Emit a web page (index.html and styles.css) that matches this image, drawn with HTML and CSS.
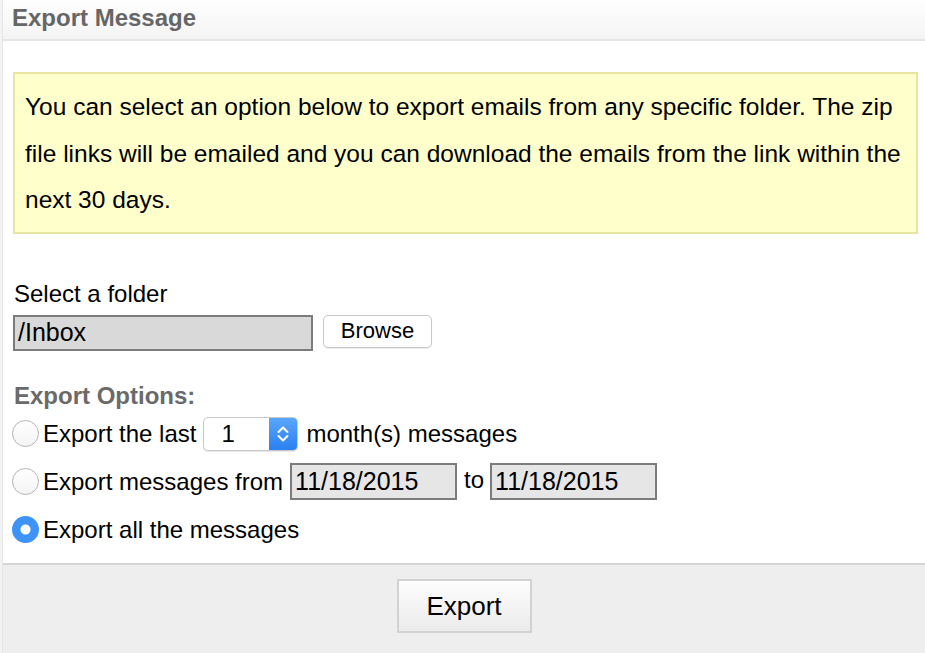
FILE: index.html
```html
<!DOCTYPE html>
<html>
<head>
<meta charset="utf-8">
<link rel="stylesheet" href="styles.css">
</head>
<body>
<div class="dialog">
  <div class="header"><span class="title">Export Message</span></div>
  <div class="content">
    <div class="notice">You can select an option below to export emails from any specific folder. The zip file links will be emailed and you can download the emails from the link within the next 30 days.</div>
    <div class="label">Select a folder</div>
    <div class="folder-row">
      <div class="field folder">/Inbox</div>
      <button class="browse">Browse</button>
    </div>
    <div class="section">Export Options:</div>
    <div class="opt">
      <span class="radio"></span>
      <span class="opt-text">Export the last</span>
      <span class="select"><span class="sel-val">1</span><span class="sel-arrow"><svg width="14" height="22" viewBox="0 0 14 22"><path d="M2.5 9 L7 4.5 L11.5 9 M2.5 13 L7 17.5 L11.5 13" fill="none" stroke="#fff" stroke-width="2" stroke-linecap="round" stroke-linejoin="round"/></svg></span></span>
      <span class="opt-text">month(s) messages</span>
    </div>
    <div class="opt">
      <span class="radio"></span>
      <span class="opt-text">Export messages from</span>
      <span class="field date">11/18/2015</span>
      <span class="to">to</span>
      <span class="field date">11/18/2015</span>
    </div>
    <div class="opt">
      <span class="radio checked"></span>
      <span class="opt-text">Export all the messages</span>
    </div>
  </div>
  <div class="footer"><button class="export">Export</button></div>
</div>
</body>
</html>
```
FILE: styles.css
```css
html, body { margin: 0; padding: 0; }
body {
  background: #f3f3f3;
  font-family: "Liberation Sans", Arial, sans-serif;
  color: #000;
  width: 925px;
  height: 653px;
  overflow: hidden;
}
.dialog {
  margin-left: 2px;
  border-left: 1px solid #e6e6e6;
  background: #fff;
  height: 653px;
  display: flex;
  flex-direction: column;
}
.header {
  box-sizing: border-box;
  height: 41px;
  background: linear-gradient(#fefefe, #f4f4f4);
  border-bottom: 2px solid #e3e5e8;
  display: flex;
  align-items: center;
  padding-left: 9px;
}
.title {
  font-weight: bold;
  font-size: 24px;
  color: #666;
  margin-top: -4px;
}
.content {
  flex: 1;
  padding: 31px 0 0 10px;
}
.notice {
  width: 881px;
  background: #ffffcc;
  border: 2px solid #e8e5a2;
  padding: 10px 10px 8px 10px;
  font-size: 24.5px;
  line-height: 46.5px;
}
.label {
  margin-top: 46px;
  font-size: 24px;
  line-height: 28px;
  padding-left: 1px;
}
.folder-row {
  margin-top: 7px;
  display: flex;
  align-items: flex-start;
  gap: 10px;
}
.field {
  box-sizing: border-box;
  border: 2px solid #7c7c7c;
  font-size: 25px;
  display: flex;
  align-items: center;
  padding-left: 3px;
}
.folder {
  width: 300px;
  height: 36px;
  background: #d9d9d9;
}
.browse {
  width: 109px;
  height: 33px;
  background: #fff;
  border: 1px solid #c9c9c9;
  border-radius: 5px;
  font-family: "Liberation Sans", Arial, sans-serif;
  font-size: 22px;
  color: #000;
  padding: 0;
  box-shadow: 0 1px 1px rgba(0,0,0,0.08);
}
.section {
  margin-top: 31px;
  font-weight: bold;
  font-size: 24px;
  color: #6a6a6a;
  line-height: 28px;
  padding-left: 1px;
}
.opt {
  display: flex;
  align-items: center;
  height: 48px;
  margin-left: -1px;
}
.radio {
  box-sizing: border-box;
  width: 27px;
  height: 27px;
  border-radius: 50%;
  border: 1px solid #b5b5b5;
  background: linear-gradient(#fff, #f4f4f4);
  margin-right: 4px;
  flex-shrink: 0;
}
.radio.checked {
  border: none;
  background: radial-gradient(circle, #fff 0, #fff 4.5px, #3d93f7 5.5px);
}
.opt-text {
  font-size: 24px;
  white-space: nowrap;
}
.select {
  box-sizing: border-box;
  display: flex;
  width: 95px;
  height: 34px;
  margin: 0 8px 0 7px;
  border: 1px solid #c8c8c8;
  border-radius: 5px;
  overflow: hidden;
  background: #fff;
  box-shadow: 0 1px 1px rgba(0,0,0,0.1);
}
.sel-val {
  flex: 1;
  font-size: 24px;
  padding-left: 17px;
  display: flex;
  align-items: center;
}
.sel-arrow {
  width: 28px;
  background: linear-gradient(#5aa6fb, #2a80f2);
  display: flex;
  align-items: center;
  justify-content: center;
}
.date {
  width: 167px;
  height: 37px;
  background: #e6e6e6;
  margin-left: 7px;
}
.to {
  font-size: 24px;
  margin: 0 6px 0 7px;
  position: relative;
  top: -2px;
}
.to + .date { margin-left: 0; }
.footer {
  box-sizing: border-box;
  height: 90px;
  border-top: 2px solid #d5d5d5;
  background: #eeeeee;
  display: flex;
  justify-content: center;
  align-items: flex-start;
  padding-top: 14px;
}
.export {
  width: 135px;
  height: 54px;
  border: 2px solid #d2d2d2;
  background: linear-gradient(#fdfdfd, #ebebeb);
  font-family: "Liberation Sans", Arial, sans-serif;
  font-size: 26px;
  color: #000;
  padding: 0;
}
```
